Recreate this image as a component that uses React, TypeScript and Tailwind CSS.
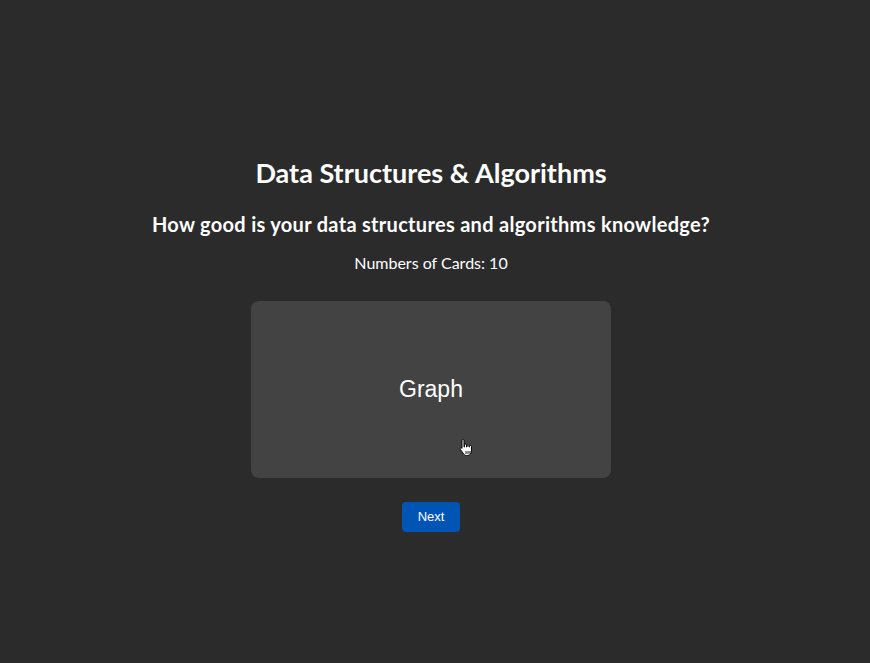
export default function App() {
	return (
		<main className="min-h-[663px] w-full bg-[#2b2b2b] text-white flex flex-col items-center pt-[156px] pr-[8px] font-['Lato',sans-serif]">
			<h1 className="text-[27px] font-bold leading-[34px]">
				Data Structures &amp; Algorithms
			</h1>
			<h2 className="mt-[21px] text-[20px] font-bold leading-[26px] tracking-[0.3px]">
				How good is your data structures and algorithms knowledge?
			</h2>
			<p className="mt-[15px] text-[16px] leading-[22px]">Numbers of Cards: 10</p>
			<div className="relative mt-[27px] w-[360px] h-[177px] rounded-lg bg-[#434343] flex items-center justify-center">
				<span className="font-['Liberation_Sans',sans-serif] text-[23px]">Graph</span>
				<svg
					className="absolute left-[208px] top-[137px]"
					width="15"
					height="19"
					viewBox="0 0 15 19"
				>
					<path
						d="M4 1.5c.6 0 1 .4 1 1V9h.5V7c0-.6.4-1 1-1s1 .4 1 1v2h.5V7.8c0-.6.4-1 1-1s1 .4 1 1V9h.5v-.6c0-.6.4-1 1-1s1 .4 1 1v4.8c0 2.4-1.6 4.3-4 4.3H7.6c-1.3 0-2.3-.6-3-1.6L1.3 11.3c-.4-.5-.3-1.1.2-1.4.5-.3 1-.2 1.4.2L3 10.4V2.5c0-.6.4-1 1-1z"
						fill="#fff"
						stroke="#000"
						strokeWidth="1"
					/>
					<path d="M7 13v3M9 13v3M11 13v3" stroke="#000" strokeWidth="0.9" />
				</svg>
			</div>
			<button className="mt-[24px] w-[58px] h-[30px] rounded-[4px] bg-[#0054b4] text-[13px] font-['Liberation_Sans',sans-serif] text-white">
				Next
			</button>
		</main>
	);
}
